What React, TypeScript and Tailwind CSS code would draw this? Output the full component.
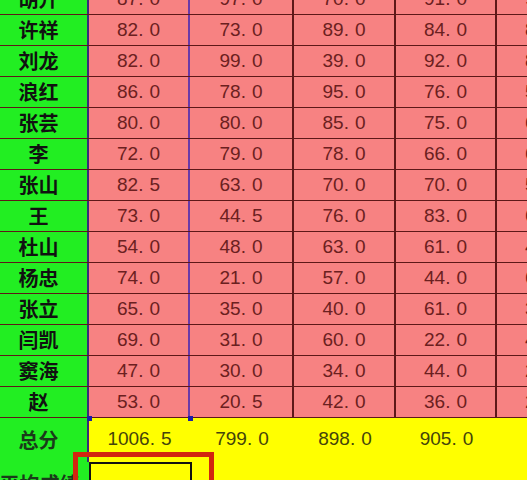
import React from 'react';

type Row = { name: string; scores: string[] };

const rows: Row[] = [
  { name: '胡升', scores: ['87.0', '97.0', '70.0', '91.0', '95.0'] },
  { name: '许祥', scores: ['82.0', '73.0', '89.0', '84.0', '85.0'] },
  { name: '刘龙', scores: ['82.0', '99.0', '39.0', '92.0', '88.0'] },
  { name: '浪红', scores: ['86.0', '78.0', '95.0', '76.0', '59.0'] },
  { name: '张芸', scores: ['80.0', '80.0', '85.0', '75.0', '68.0'] },
  { name: '李', scores: ['72.0', '79.0', '78.0', '66.0', '64.0'] },
  { name: '张山', scores: ['82.5', '63.0', '70.0', '70.0', '57.0'] },
  { name: '王', scores: ['73.0', '44.5', '76.0', '83.0', '66.0'] },
  { name: '杜山', scores: ['54.0', '48.0', '63.0', '61.0', '45.0'] },
  { name: '杨忠', scores: ['74.0', '21.0', '57.0', '44.0', '63.0'] },
  { name: '张立', scores: ['65.0', '35.0', '40.0', '61.0', '38.0'] },
  { name: '闫凯', scores: ['69.0', '31.0', '60.0', '22.0', '47.0'] },
  { name: '窦海', scores: ['47.0', '30.0', '34.0', '44.0', '26.0'] },
  { name: '赵', scores: ['53.0', '20.5', '42.0', '36.0', '29.0'] },
];

const totals = ['1006.5', '799.0', '898.0', '905.0', '870.0'];

const cols = 'grid grid-cols-[89px_101px_104px_102px_101px_101px]';

// 表格里的数字：小数点后面留一个空格，像原图的样子
const Num = ({ v }: { v: string }) => {
  const [a, b] = v.split('.');
  return (
    <span>
      {a}.<span className="ml-[6px]">{b}</span>
    </span>
  );
};

const App: React.FC = () => {
  return (
    <div className="relative w-[527px] h-[480px] overflow-hidden bg-[#ffff00]">
      <div className="mt-[-16px] w-[598px] font-['Liberation_Sans',sans-serif]">
        {/* 成绩行 */}
        {rows.map((r) => (
          <div key={r.name} className={`${cols} h-[31px] border-b-2 border-[#5e1818]`}>
            <div className="flex items-center justify-center pr-[10px] bg-[#22ee22] border-r-2 border-[#3a2a7a] font-['Noto_Sans_CJK_SC',sans-serif] font-bold text-[20px] text-[#111]">
              {r.name}
            </div>
            {r.scores.map((s, i) => (
              <div
                key={i}
                className={`flex items-center justify-center bg-[#f78282] text-[19px] text-[#6b2020] border-r-2 ${
                  i === 0 ? 'border-[#6a3aa8]' : 'border-[#5e1818]'
                }`}
              >
                <Num v={s} />
              </div>
            ))}
          </div>
        ))}

        {/* 总分 */}
        <div className={`${cols} h-[44px]`}>
          <div className="flex items-center justify-center pr-[10px] bg-[#22ee22] border-r-2 border-[#3a2a7a] font-['Noto_Sans_CJK_SC',sans-serif] font-bold text-[20px] text-[#1a3a1a]">
            总分
          </div>
          {totals.map((t, i) => (
            <div
              key={i}
              className={`flex items-center justify-center pb-[2px] text-[19px] text-[#44440a] ${
                i === 4 ? 'pl-[14px]' : ''
              }`}
            >
              <Num v={t} />
            </div>
          ))}
        </div>

        {/* 平均成绩 */}
        <div className={`${cols} h-[44px]`}>
          <div className="flex items-center justify-center pr-[10px] bg-[#22ee22] font-['Noto_Sans_CJK_SC',sans-serif] font-bold text-[20px] text-[#1a3a1a] whitespace-nowrap">
            平均成绩
          </div>
          <div className="border-t-2 border-x-2 border-[#111] w-[103px]" />
          <div />
          <div />
          <div />
          <div />
        </div>
      </div>

      {/* 选区的小方块 */}
      <div className="absolute left-[87px] top-[416px] w-[5px] h-[5px] bg-[#1c1ca8]" />
      <div className="absolute left-[188px] top-[416px] w-[5px] h-[5px] bg-[#1c1ca8]" />

      {/* 红框标注 */}
      <div className="absolute left-[73px] top-[452px] w-[141px] h-[60px] border-[5px] border-[#d2250f]" />
    </div>
  );
};

export default App;
